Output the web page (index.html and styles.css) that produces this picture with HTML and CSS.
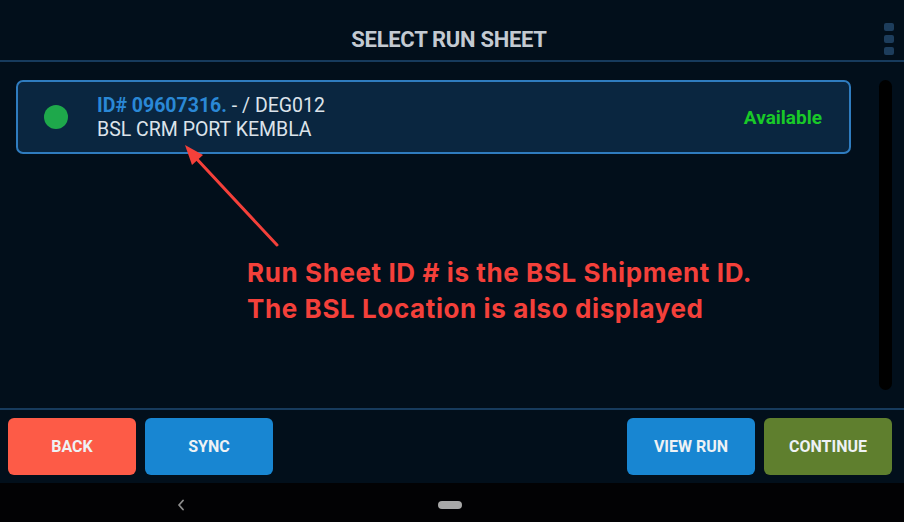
FILE: index.html
```html
<!DOCTYPE html>
<html>
<head>
<meta charset="utf-8">
<link rel="stylesheet" href="styles.css">
</head>
<body>
<div class="app">
  <header class="header">
    <div></div>
    <h1 class="title">SELECT RUN SHEET</h1>
    <div class="menu"><span></span><span></span><span></span></div>
  </header>
  <main class="main">
    <div class="list">
      <div class="card">
        <span class="dot"></span>
        <div class="info">
          <div class="line1"><span class="id">ID# 09607316.</span> - / DEG012</div>
          <div class="line2">BSL CRM PORT KEMBLA</div>
        </div>
        <span class="status">Available</span>
      </div>
    </div>
    <div class="scrollbar"></div>
  </main>
  <footer class="footer">
    <button class="btn back">BACK</button>
    <button class="btn sync">SYNC</button>
    <div class="spacer"></div>
    <button class="btn sync">VIEW RUN</button>
    <button class="btn continue">CONTINUE</button>
  </footer>
  <nav class="navbar">
    <svg class="nav-back" width="8" height="12" viewBox="0 0 8 12"><polyline points="6,1.5 2,6 6,10.5" fill="none" stroke="#8d8d8d" stroke-width="1.8" stroke-linecap="round" stroke-linejoin="round"/></svg>
    <span class="nav-home"></span>
  </nav>
  <svg class="arrow" width="904" height="522" viewBox="0 0 904 522">
    <line x1="277" y1="245" x2="194" y2="156" stroke="#f4403a" stroke-width="3" stroke-linecap="round"/>
    <polygon points="185,145 203,155 192,165" fill="#f4403a"/>
  </svg>
  <div class="note">Run Sheet ID # is the BSL Shipment ID.<br>The BSL Location is also displayed</div>
</div>
</body>
</html>
```
FILE: styles.css
```css
* { box-sizing: border-box; }
html, body { margin: 0; padding: 0; }
body {
  background: #020f1b;
  font-family: Roboto, "Liberation Sans", sans-serif;
  width: 904px;
  height: 522px;
  overflow: hidden;
}
.app {
  position: relative;
  width: 904px;
  height: 522px;
  display: flex;
  flex-direction: column;
}
.header {
  height: 62px;
  border-bottom: 2px solid #173b5d;
  display: grid;
  grid-template-columns: 1fr auto 1fr;
  align-items: center;
}
.title {
  margin: 0;
  font-size: 22px;
  font-weight: 700;
  color: #c3cad2;
  letter-spacing: -0.3px;
  padding-top: 18px;
  padding-right: 6px;
}
.menu {
  justify-self: end;
  display: flex;
  flex-direction: column;
  gap: 4px;
  margin-right: 10px;
  padding-top: 18px;
}
.menu span {
  width: 10px;
  height: 8px;
  background: #1d3d5c;
  border-radius: 2px;
}
.main {
  flex: 1;
  display: flex;
  padding: 18px 12px 18px 16px;
  gap: 28px;
}
.list { flex: 1; }
.card {
  height: 74px;
  border: 2px solid #2f7cbf;
  border-radius: 7px;
  background: #0a2640;
  display: flex;
  align-items: center;
  padding: 0 27px 0 26px;
}
.dot {
  width: 24px;
  height: 24px;
  border-radius: 50%;
  background: #1ea84b;
  flex: none;
}
.info {
  flex: 1;
  margin-left: 29px;
  font-size: 19.5px;
  line-height: 24px;
  color: #dce3ea;
  padding-top: 2px;
}
.id { color: #2a88d6; font-weight: 700; }
.status {
  color: #19c928;
  font-weight: 700;
  font-size: 19px;
}
.scrollbar {
  width: 13px;
  background: #000;
  border-radius: 7px;
}
.footer {
  height: 75px;
  border-top: 2px solid #173b5d;
  display: flex;
  padding: 8px 12px 8px 8px;
  gap: 9px;
}
.spacer { flex: 1; }
.btn {
  width: 128px;
  height: 57px;
  border: none;
  border-radius: 6px;
  color: #eef2f5;
  font-family: Roboto, "Liberation Sans", sans-serif;
  font-weight: 700;
  font-size: 16px;
  padding: 0;
}
.back { background: #fd5b47; }
.sync { background: #1886d2; }
.continue { background: #5f7f2e; }
.navbar {
  height: 39px;
  background: #020204;
  display: flex;
  align-items: center;
  padding-left: 177px;
  padding-top: 4px;
}
.nav-back { flex: none; }
.nav-home {
  margin-left: 253px;
  width: 24px;
  height: 8px;
  border-radius: 4px;
  background: #a8a8a8;
}
.arrow {
  position: absolute;
  left: 0;
  top: 0;
  pointer-events: none;
}
.note {
  position: absolute;
  left: 247px;
  top: 255px;
  font-family: Inter, "Open Sans", sans-serif;
  font-weight: 700;
  font-size: 26px;
  line-height: 36px;
  letter-spacing: 0.6px;
  color: #f4403a;
}
```
